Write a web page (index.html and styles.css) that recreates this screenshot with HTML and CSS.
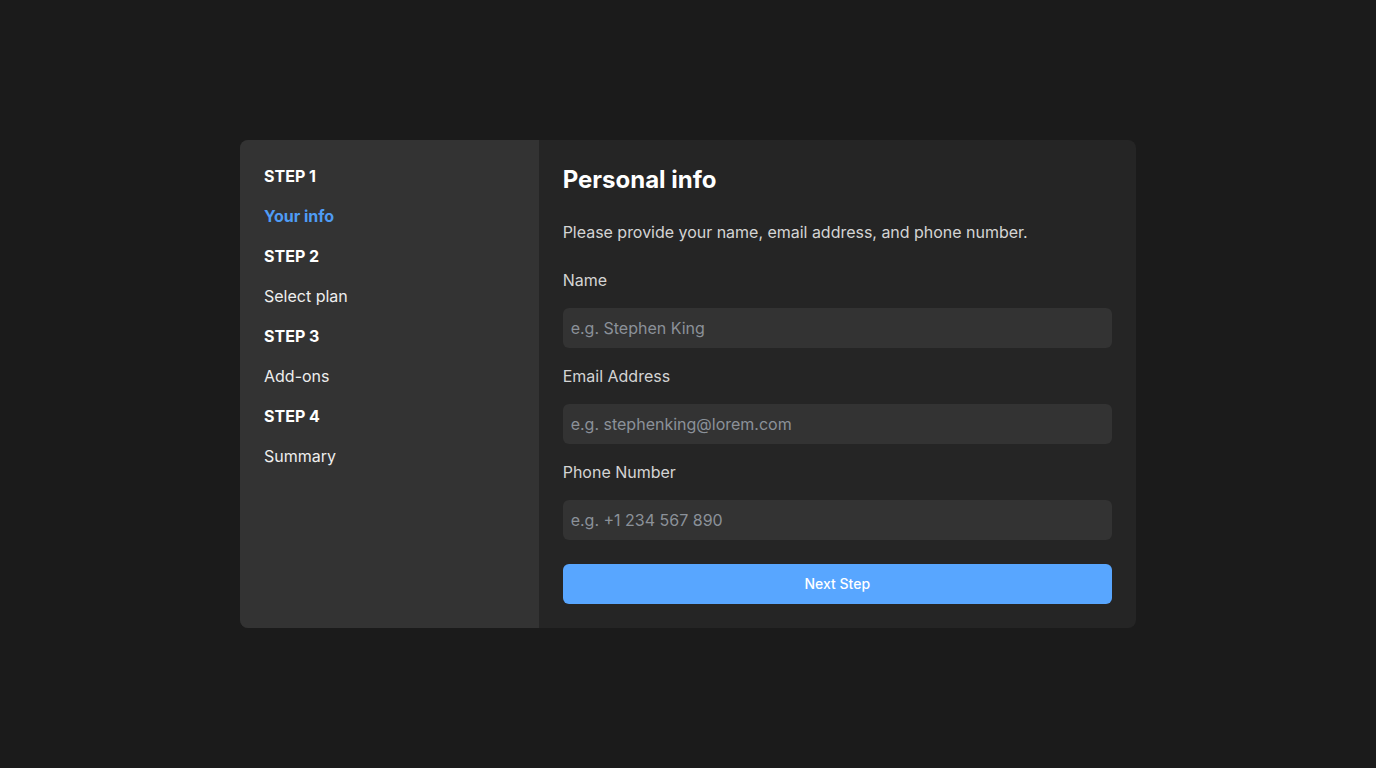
FILE: index.html
```html
<!DOCTYPE html>
<html lang="en">
<head>
<meta charset="utf-8">
<title>Personal info</title>
<link rel="stylesheet" href="styles.css">
</head>
<body>
<div class="card">
  <aside class="sidebar">
    <div class="step">STEP 1</div>
    <div class="step-name active">Your info</div>
    <div class="step">STEP 2</div>
    <div class="step-name">Select plan</div>
    <div class="step">STEP 3</div>
    <div class="step-name">Add-ons</div>
    <div class="step">STEP 4</div>
    <div class="step-name">Summary</div>
  </aside>
  <main class="main">
    <h1 class="title">Personal info</h1>
    <p class="desc">Please provide your name, email address, and phone number.</p>
    <form class="form">
      <label class="label" for="name">Name</label>
      <input class="input" id="name" type="text" placeholder="e.g. Stephen King">
      <label class="label" for="email">Email Address</label>
      <input class="input" id="email" type="email" placeholder="e.g. stephenking@lorem.com">
      <label class="label" for="phone">Phone Number</label>
      <input class="input" id="phone" type="tel" placeholder="e.g. +1 234 567 890">
      <button class="btn" type="button">Next Step</button>
    </form>
  </main>
</div>
</body>
</html>
```

FILE: styles.css
```css
* { box-sizing: border-box; }
html, body { margin: 0; padding: 0; }
body {
  background: #1b1b1b;
  font-family: Inter, "Noto Sans", "Liberation Sans", sans-serif;
  min-height: 100vh;
  display: flex;
  align-items: center;
  justify-content: center;
}
.card {
  width: 896px;
  display: grid;
  grid-template-columns: 1fr 2fr;
  border-radius: 8px;
  overflow: hidden;
  background: #252525;
}
.sidebar {
  background: #333333;
  padding: 24px;
  display: flex;
  flex-direction: column;
  gap: 16px;
}
.step {
  font-size: 16px;
  line-height: 24px;
  font-weight: 700;
  color: #ffffff;
}
.step-name {
  font-size: 16px;
  line-height: 24px;
  color: #eeeeee;
}
.step-name.active {
  color: #4f9cf5;
  font-weight: 700;
}
.main {
  padding: 24px;
  display: flex;
  flex-direction: column;
  gap: 24px;
}
.title {
  margin: 0;
  font-size: 24px;
  line-height: 32px;
  font-weight: 700;
  color: #ffffff;
}
.desc {
  margin: 0;
  font-size: 16px;
  line-height: 24px;
  color: #d4d4d4;
  letter-spacing: -0.02px;
}
.form {
  display: flex;
  flex-direction: column;
  gap: 16px;
}
.label {
  font-size: 16px;
  line-height: 24px;
  color: #d4d4d4;
}
.input {
  height: 40px;
  border: none;
  border-radius: 6px;
  background: #333333;
  padding: 0 8px;
  font-family: inherit;
  font-size: 16px;
  color: #eeeeee;
  outline: none;
}
.input::placeholder { color: #8b9199; }
.btn {
  margin-top: 8px;
  height: 40px;
  border: none;
  border-radius: 6px;
  background: #58a6ff;
  color: #ffffff;
  font-family: inherit;
  font-size: 14px;
  font-weight: 500;
  padding: 0 0 2px;
}
```
